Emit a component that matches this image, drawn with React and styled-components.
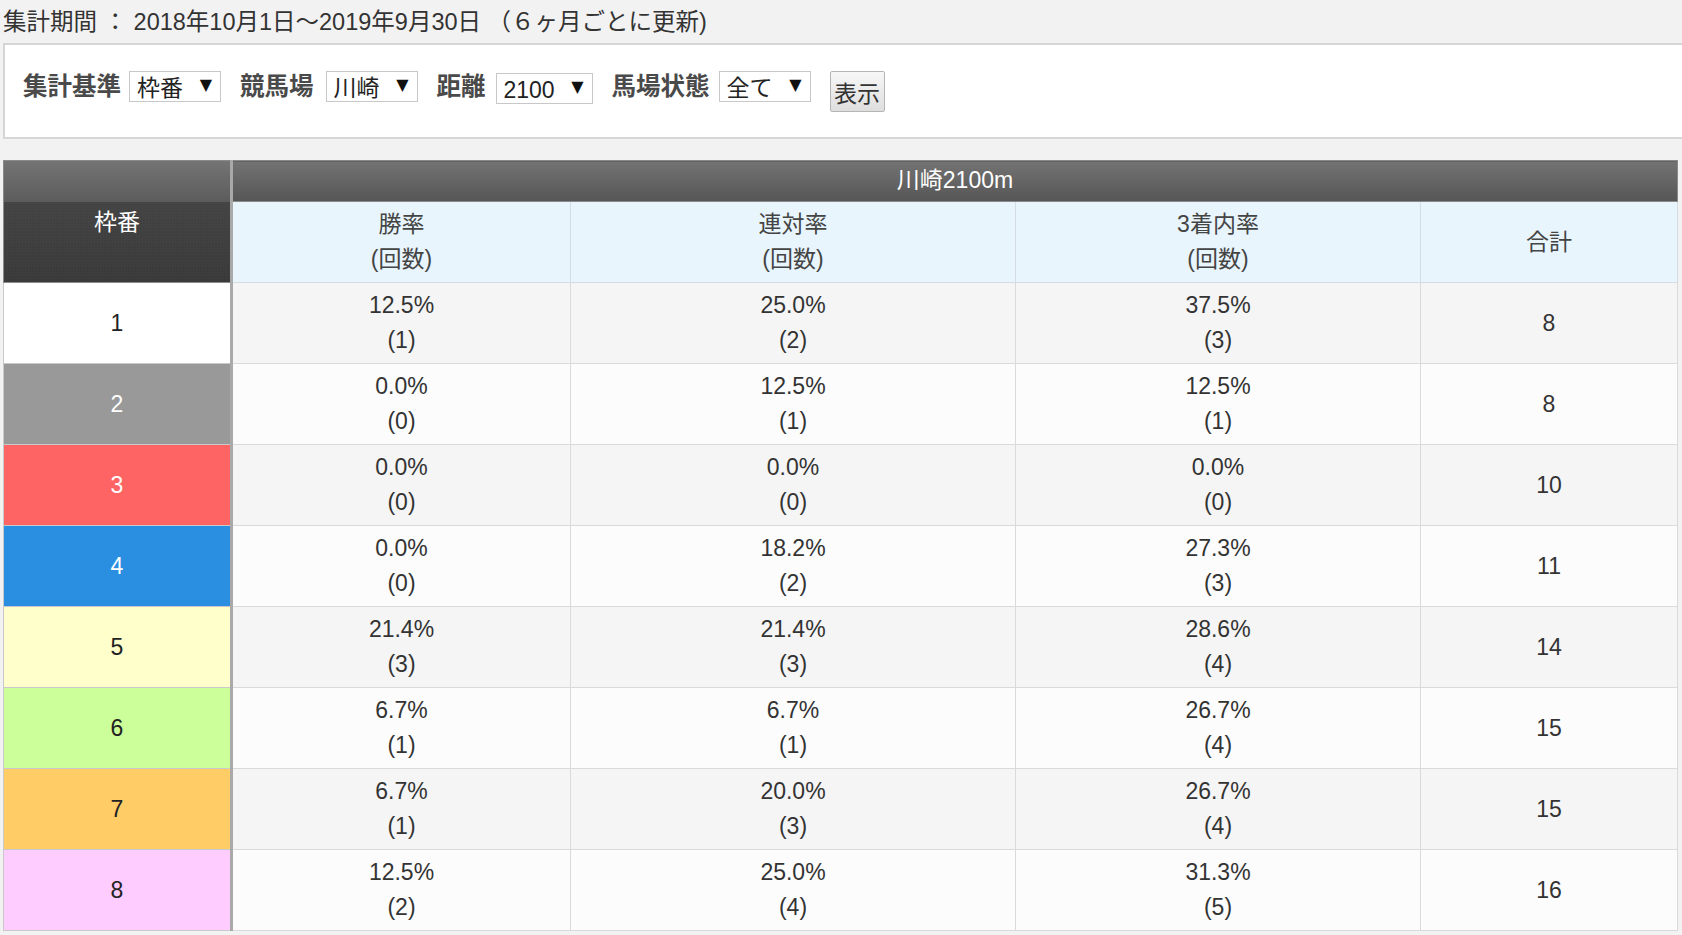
import React from "react";
import styled, { createGlobalStyle } from "styled-components";

const GlobalStyle = createGlobalStyle`
  html, body { margin: 0; padding: 0; }
  body {
    background: #f2f2f2;
    font-family: "Liberation Sans", "Noto Sans CJK JP", sans-serif;
    color: #333;
    overflow-x: hidden;
  }
`;

const Page = styled.div`
  padding: 0 4px 0 3px;
`;

const Period = styled.div`
  font-size: 23.5px;
  line-height: 44px;
  height: 43px;
  color: #333;
  white-space: nowrap;
`;

const FilterPanel = styled.form`
  display: flex;
  align-items: flex-start;
  background: #fff;
  border: 2px solid #d6d6d6;
  border-right: none;
  margin-right: -4px;
  padding: 26px 0 25px 18px;
`;

const Label = styled.span`
  font-size: 24.5px;
  font-weight: 700;
  color: #4a4a4a;
  line-height: 31px;
  margin-right: ${(p) => p.$gap || 9}px;
  white-space: nowrap;
`;

const SelectBox = styled.div`
  display: flex;
  align-items: center;
  justify-content: space-between;
  box-sizing: border-box;
  width: ${(p) => p.$w}px;
  height: 31px;
  margin-top: ${(p) => p.$offset || 0}px;
  margin-right: 19px;
  padding: 0 8px 0 7px;
  background: #fff;
  border: 1px solid #c8c8c8;
  font-size: 23px;
  color: #222;
`;

const SelectText = styled.span`
  line-height: 29px;
  padding-top: 3px;
`;

const Arrow = styled.span`
  font-family: "DejaVu Sans", sans-serif;
  font-size: 16px;
  color: #111;
  line-height: 1;
  margin-top: -3px;
`;

const ShowButton = styled.button`
  box-sizing: border-box;
  width: 55px;
  height: 41px;
  padding: 0;
  font-family: inherit;
  font-size: 23px;
  color: #333;
  border: 1px solid #b5b5b5;
  border-radius: 2px;
  background: linear-gradient(#f7f7f7, #dedede);
`;

const Table = styled.table`
  width: 100%;
  margin-top: 21px;
  border-collapse: collapse;
  table-layout: fixed;
  border: 1px solid #cfcfcf;
  font-size: 23px;
`;

const HeadCell = styled.th`
  font-weight: 400;
  color: #fff;
  line-height: 35px;
  padding: 2px 0 3px;
  text-align: center;
  border: 1px solid #8a8a8a;
  background: linear-gradient(#737373, #565656);
`;

const FrameHead = styled.th`
  font-weight: 400;
  color: #fff;
  text-align: center;
  vertical-align: middle;
  padding-bottom: 4px;
  border: 1px solid #8a8a8a;
  border-right: 3px solid #a9a9a9;
  background-color: #434343;
  background-image:
    linear-gradient(#747474, #5c5c5c),
    radial-gradient(rgba(0, 0, 0, 0.18) 0.8px, transparent 1px),
    linear-gradient(#4b4b4b, #3c3c3c);
  background-size: 100% 41px, 3px 3px, 100% 100%;
  background-repeat: no-repeat, repeat, no-repeat;
`;

const SubHead = styled.th`
  font-weight: 400;
  color: #444;
  line-height: 35px;
  padding: 5px 0;
  text-align: center;
  background: #e8f5fd;
  border: 1px solid #d6dde2;
`;

const FrameCell = styled.td`
  background: ${(p) => p.$bg};
  color: ${(p) => p.$fg};
  text-align: center;
  vertical-align: middle;
  border: 1px solid #c9c9c9;
  border-right: 3px solid #a9a9a9;
`;

const DataCell = styled.td`
  background: ${(p) => (p.$odd ? "#f5f5f5" : "#fcfcfc")};
  color: #333;
  line-height: 35px;
  padding: 5px 0;
  text-align: center;
  vertical-align: middle;
  border: 1px solid #dadada;
`;

const Line = styled.span`
  display: block;
`;

const frames = [
  { n: 1, bg: "#ffffff", fg: "#222", v: [["12.5%", 1], ["25.0%", 2], ["37.5%", 3]], t: 8 },
  { n: 2, bg: "#999999", fg: "#fff", v: [["0.0%", 0], ["12.5%", 1], ["12.5%", 1]], t: 8 },
  { n: 3, bg: "#ff6464", fg: "#fff", v: [["0.0%", 0], ["0.0%", 0], ["0.0%", 0]], t: 10 },
  { n: 4, bg: "#2a8fe0", fg: "#fff", v: [["0.0%", 0], ["18.2%", 2], ["27.3%", 3]], t: 11 },
  { n: 5, bg: "#ffffcc", fg: "#222", v: [["21.4%", 3], ["21.4%", 3], ["28.6%", 4]], t: 14 },
  { n: 6, bg: "#ccff99", fg: "#222", v: [["6.7%", 1], ["6.7%", 1], ["26.7%", 4]], t: 15 },
  { n: 7, bg: "#ffcc66", fg: "#222", v: [["6.7%", 1], ["20.0%", 3], ["26.7%", 4]], t: 15 },
  { n: 8, bg: "#ffccff", fg: "#222", v: [["12.5%", 2], ["25.0%", 4], ["31.3%", 5]], t: 16 },
];

const Select = ({ w, offset, children }) => (
  <SelectBox $w={w} $offset={offset}>
    <SelectText>{children}</SelectText>
    <Arrow>▼</Arrow>
  </SelectBox>
);

export default function App() {
  return (
    <>
      <GlobalStyle />
      <Page>
        <Period>集計期間 ： 2018年10月1日～2019年9月30日 （６ヶ月ごとに更新)</Period>
        <FilterPanel onSubmit={(e) => e.preventDefault()}>
          <Label $gap={8}>集計基準</Label>
          <Select w={92}>枠番</Select>
          <Label $gap={12}>競馬場</Label>
          <Select w={92}>川崎</Select>
          <Label $gap={10}>距離</Label>
          <Select w={97} offset={2}>2100</Select>
          <Label $gap={9}>馬場状態</Label>
          <Select w={92}>全て</Select>
          <ShowButton type="submit">表示</ShowButton>
        </FilterPanel>
        <Table>
          <colgroup>
            <col style={{ width: 228 }} />
            <col style={{ width: 339 }} />
            <col style={{ width: 445 }} />
            <col style={{ width: 405 }} />
            <col />
          </colgroup>
          <thead>
            <tr>
              <FrameHead rowSpan={2}>枠番</FrameHead>
              <HeadCell colSpan={4}>川崎2100m</HeadCell>
            </tr>
            <tr>
              <SubHead><Line>勝率</Line><Line>(回数)</Line></SubHead>
              <SubHead><Line>連対率</Line><Line>(回数)</Line></SubHead>
              <SubHead><Line>3着内率</Line><Line>(回数)</Line></SubHead>
              <SubHead>合計</SubHead>
            </tr>
          </thead>
          <tbody>
            {frames.map((f, i) => (
              <tr key={f.n}>
                <FrameCell $bg={f.bg} $fg={f.fg}>{f.n}</FrameCell>
                {f.v.map(([rate, count], j) => (
                  <DataCell key={j} $odd={i % 2 === 0}>
                    <Line>{rate}</Line>
                    <Line>({count})</Line>
                  </DataCell>
                ))}
                <DataCell $odd={i % 2 === 0}>{f.t}</DataCell>
              </tr>
            ))}
          </tbody>
        </Table>
      </Page>
    </>
  );
}
